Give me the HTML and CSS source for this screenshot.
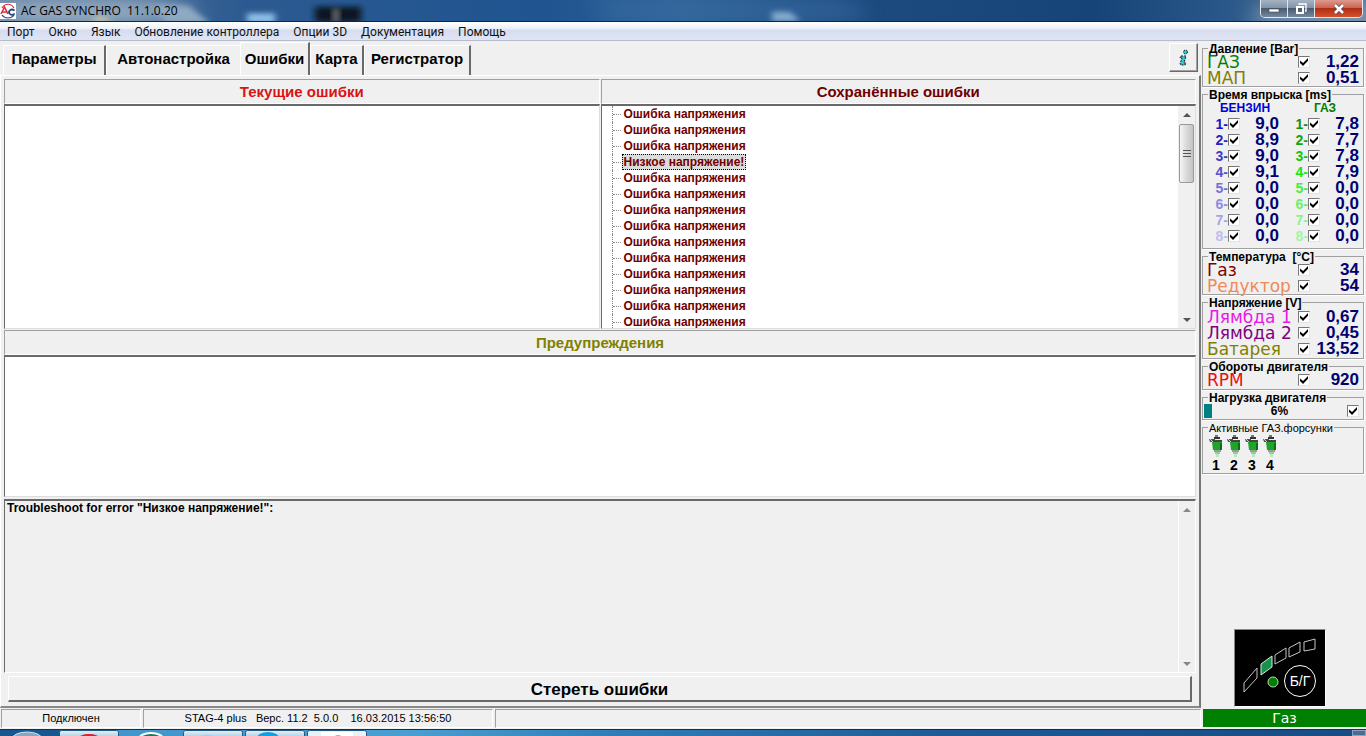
FILE: index.html
```html
<!DOCTYPE html>
<html lang="ru">
<head>
<meta charset="utf-8">
<title>AC GAS SYNCHRO 11.1.0.20</title>
<link rel="stylesheet" href="styles.css">
</head>
<body>
<header class="titlebar">
  <svg class="glass" viewBox="0 0 1366 22" preserveAspectRatio="none" aria-hidden="true">
    <defs><filter id="soft" x="-50%" y="-50%" width="200%" height="200%"><feGaussianBlur stdDeviation="3"/></filter>
    <filter id="haze" x="-50%" y="-200%" width="200%" height="500%"><feGaussianBlur stdDeviation="10"/></filter></defs>
    <ellipse cx="85" cy="12" rx="110" ry="12" fill="#a3b5c6" filter="url(#haze)"/>
    <path d="M150 6H188L210 24H168Z" fill="#8fa9c2" filter="url(#soft)"/>
    <path d="M90 22Q100 14 112 22Z" fill="#d9d4a4" filter="url(#soft)"/>
    <rect x="247" y="14" width="28" height="10" fill="#8fc0ea" filter="url(#soft)"/>
    <rect x="315" y="7" width="46" height="16" fill="#101820" filter="url(#soft)"/>
    <rect x="333" y="9" width="6" height="14" fill="#777" filter="url(#soft)"/>
    <path d="M772 12H790L800 22H772Z" fill="#b4d0ec" filter="url(#soft)"/>
    <path d="M590 0H850L870 22H610Z" fill="#3a6da2" opacity=".6" filter="url(#haze)"/>
    <rect x="1255" y="10" width="120" height="14" fill="#93a9bf" filter="url(#haze)"/>
  </svg>
  <svg class="logo" viewBox="0 0 16 16" aria-hidden="true">
    <rect width="16" height="16" fill="#fff"/>
    <path d="M2 5C5 0 11 0 14 5" fill="none" stroke="#d8323a" stroke-width="1.2"/>
    <path d="M2 12C5 16 11 16 14 12" fill="none" stroke="#27467f" stroke-width="1.2"/>
    <path d="M1 11L4.500 4L8 11M2 9H7" fill="none" stroke="#d8323a" stroke-width="1.6"/>
    <path d="M14.500 7.500C11 5 8 8 9.500 10.500C11 12.500 13.500 12 14.500 10.500" fill="none" stroke="#27467f" stroke-width="1.8"/>
  </svg>
  <h1 class="caption">AC GAS SYNCHRO&nbsp; 11.1.0.20</h1>
  <div class="winbtns">
    <button type="button" class="wb" aria-label="Свернуть"><svg width="12" height="12" viewBox="0 0 12 12"><rect x="1" y="6" width="10" height="3" fill="#fff" stroke="#445" stroke-width=".6"/></svg></button>
    <button type="button" class="wb" aria-label="Развернуть"><svg width="12" height="12" viewBox="0 0 12 12"><path d="M4 2V1H11V8H10" fill="none" stroke="#fff" stroke-width="1.3"/><rect x="2" y="4" width="6" height="6" fill="none" stroke="#fff" stroke-width="2"/></svg></button>
    <button type="button" class="wb close" aria-label="Закрыть"><svg width="12" height="12" viewBox="0 0 12 12"><path d="M2 2L10 10M10 2L2 10" stroke="#545" stroke-width="4"/><path d="M2 2L10 10M10 2L2 10" stroke="#fff" stroke-width="2.6"/></svg></button>
  </div>
</header>
<nav class="menubar">
  <a href="#port">Порт</a><a href="#window">Окно</a><a href="#lang">Язык</a><a href="#update">Обновление контроллера</a><a href="#opt">Опции 3D</a><a href="#docs">Документация</a><a href="#help">Помощь</a>
</nav>
<div class="body">
  <div class="left">
    <div class="tabs">
      <button type="button" class="tab t1">Параметры</button>
      <button type="button" class="tab t2">Автонастройка</button>
      <button type="button" class="tab t3 active">Ошибки</button>
      <button type="button" class="tab t4">Карта</button>
      <button type="button" class="tab t5">Регистратор</button>
      <button type="button" class="info" aria-label="Информация"><svg width="12" height="18" viewBox="0 0 12 18"><g fill="#2fc9c9" stroke="#123" stroke-width="1" stroke-dasharray="2 1"><circle cx="7.500" cy="3" r="2"/><path d="M3 7H8L6 14H8L7 16H3L2 15L4 9H2Z"/></g></svg></button>
    </div>
    <main class="page">
      <div class="columns">
        <section class="col">
          <h2 class="head red">Текущие ошибки</h2>
          <div class="box"></div>
        </section>
        <section class="col">
          <h2 class="head maroon">Сохранённые ошибки</h2>
          <div class="box saved">
            <ul class="tree">
              <li><span>Ошибка напряжения</span></li><li><span>Ошибка напряжения</span></li><li><span>Ошибка напряжения</span></li>
              <li><span class="sel">Низкое напряжение!</span></li>
              <li><span>Ошибка напряжения</span></li><li><span>Ошибка напряжения</span></li><li><span>Ошибка напряжения</span></li><li><span>Ошибка напряжения</span></li><li><span>Ошибка напряжения</span></li><li><span>Ошибка напряжения</span></li><li><span>Ошибка напряжения</span></li><li><span>Ошибка напряжения</span></li><li><span>Ошибка напряжения</span></li><li><span>Ошибка напряжения</span></li>
            </ul>
            <div class="scroll"><i class="up"></i><div class="thumb"><i></i></div><i class="down"></i></div>
          </div>
        </section>
      </div>
      <section class="warn">
        <h2 class="head olive">Предупреждения</h2>
        <div class="box"></div>
      </section>
      <section class="trouble">
        <p>Troubleshoot for error "Низкое напряжение!":</p>
        <div class="scroll off"><i class="up"></i><i class="down"></i></div>
      </section>
      <button type="button" class="erase">Стереть ошибки</button>
    </main>
    <footer class="status">
      <div class="cell s1">Подключен</div>
      <div class="cell s2">STAG-4 plus&nbsp;&nbsp; Верс. 11.2&nbsp; 5.0.0&nbsp;&nbsp;&nbsp; 16.03.2015 13:56:50</div>
      <div class="cell s3"></div>
    </footer>
  </div>
  <aside class="side">
    <fieldset class="grp">
      <legend>Давление [Bar]</legend>
      <div class="row"><label for="p1" class="c-green">ГАЗ</label><input type="checkbox" id="p1" checked><output>1,22</output></div>
      <div class="row"><label for="p2" class="c-olive">МАП</label><input type="checkbox" id="p2" checked><output>0,51</output></div>
    </fieldset>
    <fieldset class="grp inj">
      <legend>Время впрыска [ms]</legend>
      <div class="cols">
        <div class="ic">
          <h3 class="c-blue">БЕНЗИН</h3>
          <div class="ir"><label for="b1" class="b1">1-</label><input type="checkbox" id="b1" checked><output>9,0</output></div>
          <div class="ir"><label for="b2" class="b2">2-</label><input type="checkbox" id="b2" checked><output>8,9</output></div>
          <div class="ir"><label for="b3" class="b3">3-</label><input type="checkbox" id="b3" checked><output>9,0</output></div>
          <div class="ir"><label for="b4" class="b4">4-</label><input type="checkbox" id="b4" checked><output>9,1</output></div>
          <div class="ir"><label for="b5" class="b5">5-</label><input type="checkbox" id="b5" checked><output>0,0</output></div>
          <div class="ir"><label for="b6" class="b6">6-</label><input type="checkbox" id="b6" checked><output>0,0</output></div>
          <div class="ir"><label for="b7" class="b7">7-</label><input type="checkbox" id="b7" checked><output>0,0</output></div>
          <div class="ir"><label for="b8" class="b8">8-</label><input type="checkbox" id="b8" checked><output>0,0</output></div>
        </div>
        <div class="ic">
          <h3 class="c-green">ГАЗ</h3>
          <div class="ir"><label for="g1" class="g1">1-</label><input type="checkbox" id="g1" checked><output>7,8</output></div>
          <div class="ir"><label for="g2" class="g2">2-</label><input type="checkbox" id="g2" checked><output>7,7</output></div>
          <div class="ir"><label for="g3" class="g3">3-</label><input type="checkbox" id="g3" checked><output>7,8</output></div>
          <div class="ir"><label for="g4" class="g4">4-</label><input type="checkbox" id="g4" checked><output>7,9</output></div>
          <div class="ir"><label for="g5" class="g5">5-</label><input type="checkbox" id="g5" checked><output>0,0</output></div>
          <div class="ir"><label for="g6" class="g6">6-</label><input type="checkbox" id="g6" checked><output>0,0</output></div>
          <div class="ir"><label for="g7" class="g7">7-</label><input type="checkbox" id="g7" checked><output>0,0</output></div>
          <div class="ir"><label for="g8" class="g8">8-</label><input type="checkbox" id="g8" checked><output>0,0</output></div>
        </div>
      </div>
    </fieldset>
    <fieldset class="grp">
      <legend>Температура&nbsp; [°C]</legend>
      <div class="row"><label for="t1" class="c-maroon">Газ</label><input type="checkbox" id="t1" checked><output>34</output></div>
      <div class="row"><label for="t2" class="c-coral">Редуктор</label><input type="checkbox" id="t2" checked><output>54</output></div>
    </fieldset>
    <fieldset class="grp volt">
      <legend>Напряжение [V]</legend>
      <div class="row"><label for="v1" class="c-magenta">Лямбда 1</label><input type="checkbox" id="v1" checked><output>0,67</output></div>
      <div class="row"><label for="v2" class="c-purple">Лямбда 2</label><input type="checkbox" id="v2" checked><output>0,45</output></div>
      <div class="row"><label for="v3" class="c-olive">Батарея</label><input type="checkbox" id="v3" checked><output>13,52</output></div>
    </fieldset>
    <fieldset class="grp rpm">
      <legend>Обороты двигателя</legend>
      <div class="row"><label for="r1" class="c-red">RPM</label><input type="checkbox" id="r1" checked><output>920</output></div>
    </fieldset>
    <fieldset class="grp load">
      <legend>Нагрузка двигателя</legend>
      <div class="loadrow"><i class="bar"></i><output>6%</output><input type="checkbox" aria-label="Нагрузка двигателя" checked></div>
    </fieldset>
    <fieldset class="grp active-inj">
      <legend>Активные ГАЗ.форсунки</legend>
      <svg class="defs" width="0" height="0" aria-hidden="true"><symbol id="noz" viewBox="0 0 14 22"><path d="M6 0H9V3H6Z" fill="#777"/><path d="M5 2H11V4H5Z" fill="#333"/><path d="M0 4H6V7H1Z" fill="#555"/><path d="M3 5H13V8H3Z" fill="#444"/><path d="M1 4L4 7" stroke="#ccc"/><path d="M3 7H13V15H4Z" fill="#1fa32b"/><path d="M11 8H13V15H11Z" fill="#0c6f18"/><path d="M5 15H12V17H5Z" fill="#9a9a9a"/><path d="M6 17H11V19H6Z" fill="#8fd496"/><path d="M7 19H10V22H7Z" fill="#bbe6bf"/></symbol></svg>
      <div class="nozzles">
        <div><svg width="14" height="22"><use href="#noz"/></svg><span>1</span></div>
        <div><svg width="14" height="22"><use href="#noz"/></svg><span>2</span></div>
        <div><svg width="14" height="22"><use href="#noz"/></svg><span>3</span></div>
        <div><svg width="14" height="22"><use href="#noz"/></svg><span>4</span></div>
      </div>
    </fieldset>
    <button type="button" class="led" aria-label="Переключатель Бензин/Газ">
      <svg width="90" height="76" viewBox="0 0 90 76">
        <g fill="none" stroke="#c4c4c4"><path d="M9 53L22 38V48L9 62Z"/><path d="M40 25L51 18V28L40 34Z"/><path d="M54 18L65 12V22L54 27Z"/><path d="M69 12L80 9V19L69 21Z"/></g>
        <path d="M26 34L37 26V37L26 45Z" fill="#17924a" stroke="#d5ecd9"/>
        <circle cx="38" cy="52" r="5" fill="#008000" stroke="#b9d9b9"/>
        <circle cx="65" cy="51" r="15.500" fill="none" stroke="#fff"/>
        <text x="65" y="56" text-anchor="middle" class="ledtext">Б/Г</text>
      </svg>
    </button>
    <div class="mode">Газ</div>
  </aside>
</div>
<div class="taskbar">
  <svg width="370" height="8" viewBox="0 0 370 8" aria-hidden="true">
    <defs><linearGradient id="tk" y2="1" x2="0"><stop offset="0" stop-color="#e4f0f8"/><stop offset="1" stop-color="#9cc3de"/></linearGradient></defs>
    <rect width="60" height="8" fill="#17568f"/>
    <ellipse cx="27" cy="9" rx="15" ry="7" fill="#8ba6c0" stroke="#d4e2ee"/>
    <g fill="url(#tk)" stroke="#24567e"><rect x="59.500" y=".5" width="59" height="9" rx="2"/><rect x="183.500" y=".5" width="59" height="9" rx="2"/><rect x="245.500" y=".5" width="59" height="9" rx="2"/><rect x="307.500" y=".5" width="59" height="9" rx="2" fill="#e6f1f8"/></g>
    <ellipse cx="89" cy="9" rx="11" ry="5" fill="#d8202c"/>
    <ellipse cx="151" cy="9" rx="12" ry="6" fill="#1c7b4a" stroke="#fff" stroke-width="2"/>
    <ellipse cx="207" cy="9" rx="12" ry="4" fill="#c4cda2"/>
    <ellipse cx="268" cy="8" rx="11" ry="6" fill="#14a0e0"/>
    <rect x="321" y="2" width="32" height="8" fill="#fff"/>
    <path d="M330 8Q338 3 346 8Z" fill="#2b3c66"/>
  </svg>
  <i class="peek"></i>
</div>
</body>
</html>
```
FILE: styles.css
```css
*{box-sizing:border-box}
html,body{height:100%}
body{margin:0;display:flex;flex-direction:column;background:#f0f0f0;font-family:"Liberation Sans",Arial,sans-serif;font-size:12px;color:#000;overflow:hidden}
button{font-family:inherit;color:inherit;cursor:pointer}
h1,h2,h3,p,ul{margin:0;padding:0}

.titlebar{position:relative;flex:none;height:22px;display:flex;align-items:center;background:linear-gradient(90deg,#5d7ea2 0,#2c5a90 18%,#1f5490 40%,#2f6499 50%,#1d4b80 62%,#174478 80%,#2b588a 90%,#5c7a9b 100%);border-bottom:1px solid #14253c;overflow:hidden}
.glass{position:absolute;inset:0;width:100%;height:100%}
.logo{position:relative;width:16px;height:16px;margin-right:5px}
.caption{position:relative;flex:1;font:400 12px "Open Sans","Noto Sans",sans-serif}
.winbtns{position:relative;align-self:flex-start;display:flex;height:18px;margin-right:3px;border:1px solid #e2e9f0;border-top:0;border-radius:0 0 5px 5px;overflow:hidden}
.wb{width:27px;padding:0;border:0;border-right:1px solid #dde4ec;display:grid;place-items:center;background:linear-gradient(#a4b3c3 0,#8394a8 45%,#4a5b70 50%,#75889d 100%)}
.close{width:47px;border-right:0;background:linear-gradient(#dc9a8c 0,#cc6650 45%,#b02e16 50%,#d6512c 100%)}

.menubar{flex:none;height:19px;display:flex;align-items:center;gap:14px;padding:1px 0 0 7px;background:linear-gradient(#fff 0,#eef1f9 35%,#d6ddef 45%,#dfe5f4 100%);border-bottom:1px solid #b6bccc}
.menubar a{font:12px/16px Roboto,"Noto Sans",sans-serif;color:#111;text-decoration:none;white-space:nowrap}

.body{flex:1;min-height:0;display:flex}
.left{flex:1;min-width:0;display:flex;flex-direction:column}
.tabs{flex:none;height:34px;display:flex;align-items:flex-end;padding:0 3px 0 3px}
.tab{height:30px;padding:0 0 4px;border:0;border-left:1px solid #fff;border-top:1px solid #fff;border-right:2px solid #696969;background:#f0f0f0;font-weight:700;font-size:15px;line-height:16px;white-space:nowrap}
.t1{width:103px}.t2{width:134px;border-right:0}.t3{width:70px}.t4{width:54px}.t5{width:107px}
.tab.active{height:33px;padding-bottom:0}
.info{width:29px;height:29px;margin-left:auto;align-self:flex-start;margin-top:2px;padding:0;display:grid;place-items:center;background:#f0f0f0;border:1px solid;border-color:#fff #696969 #696969 #fff;box-shadow:inset -1px -1px #a0a0a0}
.page{flex:1;min-height:0;display:flex;flex-direction:column;border:1px solid #fff;border-width:1px 0 0 1px;border-right:2px solid #777;border-bottom:2px solid #888;padding:3px 3px 4px 3px}
.columns{flex:251 1 0;min-height:0;display:grid;grid-template-columns:1fr 1fr;gap:1px}
.col,.warn{display:flex;flex-direction:column;min-height:0}
.head{flex:none;height:25px;border:1px solid;border-color:#a0a0a0 #fff #fff #a0a0a0;font-size:15px;line-height:23px;font-weight:700;text-align:center}
.box{flex:1;min-height:0;background:#fff;border:1px solid;border-color:#696969 #ddd #ddd #696969;border-top-width:2px}
.red{color:#d81313}.maroon{color:#700000}.olive{color:#808000}
.warn{flex:168 1 0;padding-top:1px}
.saved{display:flex;overflow:hidden}
.tree{flex:1;list-style:none;padding:0 0 0 10px;color:#700000;font-size:12px;font-weight:700}
.tree li{height:16px;line-height:16px;display:flex;align-items:center;border-left:1px dotted #888;white-space:nowrap}
.tree li::before{content:"";width:8px;margin-right:1px;border-top:1px dotted #888}
.tree span{padding:0 2px}
.sel{background:#dcdcdc;outline:1px dotted #000;outline-offset:-1px}
.scroll{width:17px;display:flex;flex-direction:column;align-items:center;background:#f0f0f0;padding:7px 0 6px}
.up{border:4px solid transparent;border-top:0;border-bottom:4px solid #555}
.down{margin-top:auto;border:4px solid transparent;border-bottom:0;border-top:4px solid #555}
.thumb{width:15px;height:59px;margin-top:7px;border:1px solid #999;border-radius:2px;background:linear-gradient(90deg,#f5f5f5,#d9d9d9 50%,#c4c4c4);display:grid;place-items:center}
.thumb i{width:8px;height:8px;background:repeating-linear-gradient(#555 0 1px,transparent 1px 3px)}
.trouble{flex:172 1 0;min-height:0;display:flex;margin-top:2px;border:1px solid;border-color:#696969 #fff #fff #696969;border-top-width:2px}
.trouble p{flex:1;padding-left:2px;font-size:12px;line-height:15px;font-weight:700}
.off{border-left:1px solid #fff}
.off .up{border-bottom-color:#888}.off .down{border-top-color:#888}
.erase{flex:none;height:26px;margin:3px 4px 0;padding:3px 0 0;border:1px solid;border-color:#fff #696969 #696969 #fff;border-bottom-width:2px;border-right-width:2px;background:#f0f0f0;font-size:17px;line-height:20px;font-weight:700}
.status{flex:none;height:21px;display:flex;gap:2px;padding:1px 0 1px 1px}
.cell{border:1px solid;border-color:#a0a0a0 #fff #fff #a0a0a0;text-align:center;font-size:11px;line-height:17px;white-space:nowrap}
.s1{width:140px}.s2{width:350px}.s3{flex:1}

.side{flex:none;width:165px;display:flex;flex-direction:column;gap:2px;padding-top:2px}
.grp{margin:0 2px 0 1px;min-width:0;padding:1px 4px 0;border:1px solid #a0a0a0;box-shadow:1px 1px #fff}
.grp legend{margin-left:1px;padding:0 1px;height:10px;line-height:12px;font-size:12px;font-weight:700;white-space:nowrap}
.row{height:16px;display:grid;grid-template-columns:91px 12px 1fr;align-items:center}
.row label{font-family:"DejaVu Sans",sans-serif;font-size:17px;line-height:16px;white-space:nowrap}
.row output,.ir output{font-size:17px;line-height:16px;font-weight:700;color:#000070;text-align:right}
input[type=checkbox]{appearance:none;margin:0;width:12px;height:12px;background:#fff;border:1px solid;border-color:#777 #e4e4e4 #e4e4e4 #777;display:grid;place-items:center}
input[type=checkbox]:checked::before{content:"";width:8px;height:8px;background:#000;clip-path:polygon(0 30%,38% 64%,100% 0,100% 34%,38% 100%,0 64%)}
.inj{padding-bottom:4px}
.cols{display:grid;grid-template-columns:1fr 1fr;gap:8px}
.ic h3{height:16px;padding-left:4px;font-size:12px;line-height:17px;text-align:center}
.ir{height:16px;display:grid;grid-template-columns:21px 12px 1fr;align-items:center}
.ir label{font-size:14px;line-height:16px;font-weight:700;text-align:right}
.volt{padding:2px 4px 1px}
.rpm{padding-bottom:1px}
.c-green{color:#008000}.c-olive{color:#808000}.c-blue{color:#0000d8}.c-maroon{color:#800000}.c-coral{color:#ee8a58}.c-magenta{color:#e818e8}.c-purple{color:#800080}.c-red{color:#e81010}
.b1{color:#1414d0}.b2{color:#2424c4}.b3{color:#3c3cc8}.b4{color:#5050d0}.b5{color:#7070d8}.b6{color:#8c8ce0}.b7{color:#a4a4e8}.b8{color:#bcbcf0}
.g1{color:#109010}.g2{color:#10a810}.g3{color:#10c810}.g4{color:#10e810}.g5{color:#40f040}.g6{color:#68f068}.g7{color:#88f488}.g8{color:#a4f4a4}
.load{padding:1px 4px 0 1px}
.load legend{margin-left:4px}
.loadrow{height:16px;display:grid;grid-template-columns:8px 1fr 12px;align-items:center}
.bar{height:14px;background:#008080}
.loadrow output{text-align:center;font-weight:700;font-size:12px}
.grp.active-inj legend{font-weight:400;font-size:11px}
.defs{position:absolute}
.nozzles{display:flex;gap:4px;padding:2px 0 0 2px}
.nozzles div{display:flex;flex-direction:column;align-items:center}
.nozzles span{font-size:14px;line-height:16px;font-weight:700}
.led{margin:auto auto 0 33px;padding:0;width:92px;height:78px;background:#000;border:1px solid;border-color:#888 #fff #fff #888;display:grid;place-items:center}
.ledtext{font:14px "Liberation Sans",sans-serif;fill:#fff}
.mode{height:18px;margin:0 0 2px 2px;background:#008000;color:#fff;text-align:center;font:14px/18px "DejaVu Sans",sans-serif}
.taskbar{flex:none;height:7px;display:flex;justify-content:space-between;background:linear-gradient(90deg,#3c93c8 0,#4a9fd2 30%,#2f7db8 45%,#1d5a96 70%,#184c84 100%);border-top:1px solid #14304e}
.peek{width:14px;border:1px solid #8aa4c0;background:#4b6c92}
```
